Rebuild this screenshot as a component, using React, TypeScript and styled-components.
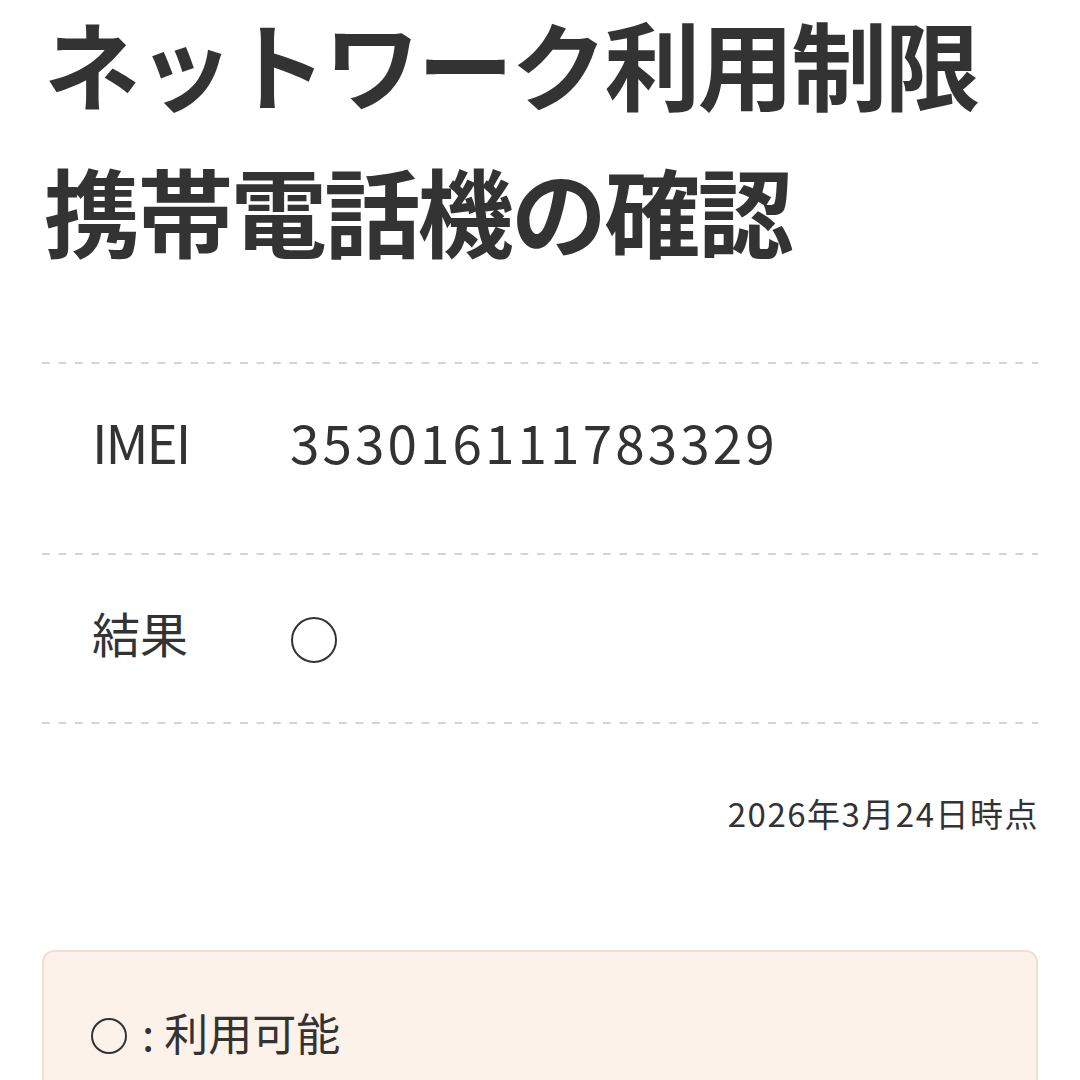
import React from "react";
import styled, { createGlobalStyle } from "styled-components";

const Global = createGlobalStyle`
  html, body { margin: 0; padding: 0; background: #ffffff; }
  body { font-family: "Noto Sans CJK JP", "Noto Sans", sans-serif; color: #333333; }
`;

const Page = styled.div`
  width: 1080px;
  height: 1080px;
  overflow: hidden;
  box-sizing: border-box;
  padding: 0 42px;
`;

const Title = styled.h1`
  margin: 0;
  padding-left: 2px;
  display: flex;
  flex-direction: column;
  gap: 23px;
  font-size: 96px;
  line-height: 124px;
  font-weight: 700;
  letter-spacing: -2.6px;
  color: #333333;
`;

const TitleLine = styled.span`
  display: block;
  white-space: nowrap;
`;

const Dashed = styled.div<{ $top?: number }>`
  height: 2px;
  margin-top: ${(p) => p.$top ?? 0}px;
  background-image: linear-gradient(to right, #d4d4d4 50%, rgba(255, 255, 255, 0) 50%);
  background-size: 16.5px 2px;
  background-repeat: repeat-x;
`;

const Row = styled.div<{ $pt: number; $pb: number }>`
  display: flex;
  align-items: center;
  padding: ${(p) => p.$pt}px 0 ${(p) => p.$pb}px 50px;
  font-size: 48px;
  line-height: 60px;
`;

const Label = styled.div`
  width: 198px;
  flex: none;
`;

const LatinText = styled.span<{ $spacing?: number }>`
  font-size: 53px;
  letter-spacing: ${(p) => p.$spacing ?? 0}px;
`;

const Value = styled.div`
  flex: 1;
`;

const Circle = styled.span`
  display: inline-block;
  width: 42px;
  height: 42px;
  border: 2px solid #333333;
  border-radius: 50%;
  margin-left: 1px;
  vertical-align: middle;
`;

const DateLine = styled.div`
  margin-top: 69px;
  text-align: right;
  font-size: 33px;
  line-height: 40px;
  letter-spacing: 1.5px;
  margin-right: -1px;
`;

const NoteBox = styled.div`
  margin-top: 117px;
  background: #fdf2e9;
  border: 2px solid #efe0cf;
  border-radius: 12px;
  padding: 50px 0 60px 46px;
  font-size: 44px;
  line-height: 60px;
`;

const SmallCircle = styled.span`
  display: inline-block;
  width: 32px;
  height: 32px;
  border: 2px solid #333333;
  border-radius: 50%;
  vertical-align: middle;
  margin: -6px 0 0 1px;
`;

const Colon = styled.span`
  display: inline-block;
  margin: 0 10px 0 15px;
`;

export default function App() {
  return (
    <>
      <Global />
      <Page>
        <Title>
          <TitleLine>ネットワーク利用制限</TitleLine>
          <TitleLine>携帯電話機の確認</TitleLine>
        </Title>
        <Dashed $top={91} />
        <Row $pt={47} $pb={80}>
          <Label>
            <LatinText $spacing={-2}>IMEI</LatinText>
          </Label>
          <Value>
            <LatinText $spacing={3.1}>353016111783329</LatinText>
          </Value>
        </Row>
        <Dashed />
        <Row $pt={47} $pb={59}>
          <Label>結果</Label>
          <Value>
            <Circle aria-label="○" />
          </Value>
        </Row>
        <Dashed />
        <DateLine>2026年3月24日時点</DateLine>
        <NoteBox>
          <SmallCircle aria-label="○" />
          <Colon>:</Colon>利用可能
        </NoteBox>
      </Page>
    </>
  );
}
